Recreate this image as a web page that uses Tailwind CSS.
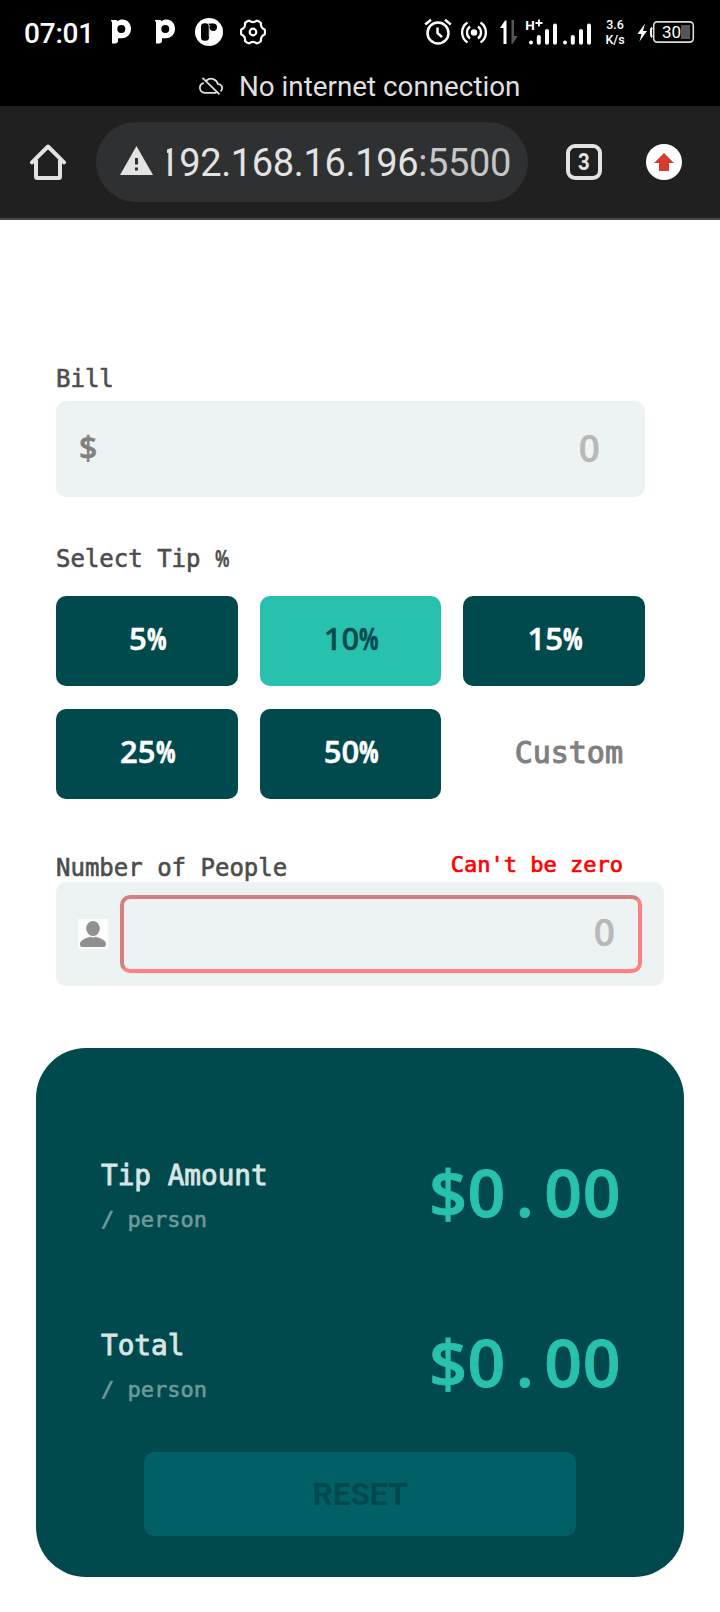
<!DOCTYPE html>
<html lang="en">
<head>
<meta charset="utf-8">
<meta name="viewport" content="width=device-width, initial-scale=1">
<title>Tip Calculator</title>
<script src="https://cdn.jsdelivr.net/npm/@tailwindcss/browser@4"></script>
</head>
<body class="bg-white font-['DejaVu_Sans_Mono',monospace]">
<div class="w-[720px] h-[1612px] overflow-hidden bg-white">

  <!-- System status bar -->
  <header class="h-[106px] bg-black text-white font-[Roboto,sans-serif]">
    <div class="h-16 flex items-center pl-6 pr-[25px]">
      <span class="w-[86px] text-[28px] leading-8 font-medium tracking-[-0.2px] pt-[3px]">07:01</span>
      <svg class="w-[22px] h-7" viewBox="110 18 22 28" fill="#fff"><path fill-rule="evenodd" d="M111 20h5.500l1 1.200c1.300-1 3-1.700 5-1.700 5 0 8.500 4 8.500 9.300 0 5.400-3.700 9.400-9 9.400h-4v2.500c0 1.800-1.200 2.800-3 2.800h-3V22c-.6-.2-1-.8-1-2zM121.300 25a4 4 0 1 0 0 8 4 4 0 0 0 0-8z"/></svg>
      <svg class="w-[22px] h-7 ml-[22px]" viewBox="110 18 22 28" fill="#fff"><path fill-rule="evenodd" d="M111 20h5.500l1 1.200c1.300-1 3-1.700 5-1.700 5 0 8.500 4 8.500 9.300 0 5.400-3.700 9.400-9 9.400h-4v2.500c0 1.800-1.200 2.800-3 2.800h-3V22c-.6-.2-1-.8-1-2zM121.300 25a4 4 0 1 0 0 8 4 4 0 0 0 0-8z"/></svg>
      <svg class="w-7 h-7 ml-[19px]" viewBox="0 0 28 28"><circle cx="14" cy="14" r="14" fill="#fff"/><rect x="6" y="5.300" width="8" height="17.500" rx="3.500"/><path d="M14 5.500v13" stroke="#999" stroke-width=".8"/><circle cx="18.300" cy="9.200" r="3.700"/><path d="M14 5.600h4v1.500h-4z"/></svg>
      <svg class="w-[26px] h-[26px] ml-[17px]" viewBox="0 0 26 26" fill="none" stroke="#fff" stroke-width="2.200"><path stroke-linejoin="round" d="M24.700 10.500Q25.300 13 24.700 15.500C21.800 16.700 20.600 18.800 21 21.900Q19.200 23.800 16.700 24.400C14.200 22.400 11.800 22.400 9.300 24.400Q6.800 23.800 5 21.900C5.400 18.800 4.200 16.700 1.300 15.500Q.7 13 1.300 10.500C4.200 9.300 5.400 7.200 5 4.100Q6.800 2.200 9.300 1.600C11.800 3.600 14.200 3.600 16.700 1.600Q19.200 2.200 21 4.100C20.600 7.200 21.800 9.300 24.700 10.500z"/><circle cx="13" cy="13" r="3.300"/></svg>
      <svg class="w-7 h-7 ml-auto" viewBox="0 0 28 28" fill="none" stroke="#fff" stroke-width="2.500"><circle cx="14" cy="15" r="10.500"/><path d="M1.200 6.500 7 1.800M26.800 6.500 21 1.800M13.500 9.500V15l4.500 4.200"/></svg>
      <svg class="w-[26px] h-[26px] ml-[9px]" viewBox="0 0 26 26" fill="none" stroke="#fff" stroke-width="2.300"><circle cx="13" cy="13.500" r="3.200" fill="#fff" stroke="none"/><path d="M9 19.500a7.500 7.500 0 0 1 0-12M17 7.500a7.500 7.500 0 0 1 0 12M6.500 23.500a12 12 0 0 1 0-20M19.500 3.500a12 12 0 0 1 0 20"/></svg>
      <svg class="w-[18px] h-6 ml-[13px]" viewBox="0 0 18 24"><path d="M6.500 24h-3V8H0L5 .5h1.500z" fill="#fff"/><path d="M11.500 0h2.500v16h3.800L12.500 24h-1z" fill="#555"/></svg>
      <svg class="w-[34px] h-[30px] ml-1.5 mb-1 overflow-visible" viewBox="524 14 34 30" fill="#fff"><text x="525.300" y="29" font-family="Roboto" font-size="13.500" font-weight="700">H</text><path d="M539 18.500v7M535.500 22h7" stroke="#fff" stroke-width="1.800"/><g stroke="#fff" stroke-width="4" stroke-linecap="round"><path d="M531 41.500v.1M538.800 36v5.700M547 30v11.700M555 24.500v17.200"/></g></svg>
      <svg class="w-[29px] h-[26px] ml-1" viewBox="562 18 29 26" stroke="#fff" stroke-width="4" stroke-linecap="round"><path d="M565 41.500v.1M572.800 36v5.700M581 30v11.700M589 24.500v17.200"/></svg>
      <span class="w-[22px] ml-[13px] text-center text-[12.5px] leading-[15px] font-medium whitespace-nowrap">3.6<br>K/s</span>
      <svg class="w-[58px] h-[24px] ml-[11px]" viewBox="638 20 58 24"><path d="M646 23.500 638.500 34h4l-2 7.500 7.500-10.500h-4z" fill="#fff"/><path d="M653 27.500c-1.500 1.500-1.500 8.300 0 9.800" fill="none" stroke="#fff" stroke-width="2"/><rect x="654.700" y="21.900" width="39.600" height="20.200" rx="3.500" fill="none" stroke="#ddd" stroke-width="1.600"/><path d="M682 25h9v14h-9z" fill="#555"/><text x="663" y="38" fill="#fff" font-family="Roboto" font-size="17" textLength="19">30</text></svg>
    </div>
    <div class="h-[42px] flex items-center pl-[199px] text-[#dfdfdf]">
      <svg class="w-6 h-[18px] mt-0.5" viewBox="0 0 24 18" fill="none" stroke="#dfdfdf" stroke-width="1.800"><path d="M7.500 3.500A7 7 0 0 1 19 7.200c3.200.2 4.300 2.600 4.100 4.300-.1 1.300-.8 2.200-1.500 2.900M4.800 5.800C2 6.700.9 8.700.9 10.800c0 2.800 2.100 5 5 5h11.500M3.500.8 20.500 17.300"/></svg>
      <span class="ml-[16px] text-[27.8px] leading-8 pt-[3px] whitespace-nowrap">No internet connection</span>
    </div>
  </header>

  <!-- Browser toolbar -->
  <nav class="h-[114px] bg-[#202020] border-b-2 border-[#48484a] flex items-center pl-[30px] pr-[38px] font-[Roboto,sans-serif]">
    <svg class="w-9 h-9" viewBox="0 0 36 36" fill="none" stroke="#e3e3e3" stroke-width="4" stroke-linejoin="round"><path stroke-linecap="round" d="M2 18.300 18 2.500 34 18.300"/><path d="M6 15.500V32.500a1.500 1.500 0 0 0 1.500 1.500h21a1.500 1.500 0 0 0 1.500-1.500V15.500"/></svg>
    <div class="ml-[30px] w-[432px] h-20 rounded-full bg-[#2f3032] flex items-center pl-6">
      <svg class="w-[33px] h-[29px] mb-[3px]" viewBox="0 0 33 29"><path d="M16.500 0 33 29H0z" fill="#e3e3e3"/><path d="M15 12h3v6.500h-3zM15 21.500h3v3h-3z" fill="#2f3032"/></svg>
      <div class="ml-[14px] mt-px w-[344px] flex justify-end overflow-hidden text-[38px] tracking-[-0.36px] leading-[46px] text-[#e3e3e3] whitespace-nowrap"><span>192.168.16.196<span class="text-[#c4c7c5]">:5500</span></span></div>
    </div>
    <div class="ml-[38px] w-9 h-9 rounded-[9px] border-4 border-[#e3e3e3] text-[#e3e3e3] text-[24px] leading-[29px] font-bold text-center"><span class="inline-block scale-x-[.85]">3</span></div>
    <svg class="w-9 h-9 ml-auto" viewBox="0 0 36 36"><circle cx="18" cy="18" r="18" fill="#fff"/><path d="M18 9 28 19h-5v8H13v-8H8z" fill="#d63c2e"/></svg>
  </nav>

  <main class="pt-[141px]">
    <form class="pl-14">
      <label class="block h-9 text-[24px] leading-9 text-[#4d4d4d] [-webkit-text-stroke:0.6px_#4d4d4d]">Bill</label>
      <div class="mt-1 w-[589px] h-24 rounded-[10px] bg-[#edf3f3] flex items-center justify-between pl-[23px] pr-[45px] pb-[2px] font-['Open_Sans',sans-serif] font-semibold">
        <span class="text-[32px] leading-10 text-[#808080] [-webkit-text-stroke:0.5px_#808080]">$</span>
        <span class="text-[37px] leading-10 text-[#b8b8b8] [-webkit-text-stroke:0.4px_#b8b8b8]">0</span>
      </div>

      <label class="mt-[43px] block h-9 text-[24px] leading-9 text-[#4d4d4d] [-webkit-text-stroke:0.6px_#4d4d4d]">Select Tip <span class="inline-block w-[14.4px] font-['Open_Sans',sans-serif] font-semibold"><span class="inline-block origin-left scale-x-[.70]">%</span></span></label>
      <div class="mt-5 w-[589px] h-[203px] grid grid-cols-3 grid-rows-2 gap-x-[22px] gap-y-[23px] font-['Open_Sans',sans-serif] font-semibold text-[31px] text-white">
        <button type="button" class="rounded-[10px] bg-[#00494d] pb-[6px] [-webkit-text-stroke:0.5px_#fff]">5<span class="inline-block w-[18px]"><span class="inline-block origin-left scale-x-[.70] font-bold [-webkit-text-stroke:0.6px_#fff]">%</span></span></button>
        <button type="button" class="rounded-[10px] bg-[#28c1ad] text-[#00494d] pb-[6px] [-webkit-text-stroke:0.3px_#00494d]">10<span class="inline-block w-[18px]"><span class="inline-block origin-left scale-x-[.70] font-bold [-webkit-text-stroke:0.4px_#00494d]">%</span></span></button>
        <button type="button" class="rounded-[10px] bg-[#00494d] pb-[6px] [-webkit-text-stroke:0.5px_#fff]">15<span class="inline-block w-[18px]"><span class="inline-block origin-left scale-x-[.70] font-bold [-webkit-text-stroke:0.6px_#fff]">%</span></span></button>
        <button type="button" class="rounded-[10px] bg-[#00494d] pb-[5px] [-webkit-text-stroke:0.5px_#fff]">25<span class="inline-block w-[18px]"><span class="inline-block origin-left scale-x-[.70] font-bold [-webkit-text-stroke:0.6px_#fff]">%</span></span></button>
        <button type="button" class="rounded-[10px] bg-[#00494d] pb-[5px] [-webkit-text-stroke:0.5px_#fff]">50<span class="inline-block w-[18px]"><span class="inline-block origin-left scale-x-[.70] font-bold [-webkit-text-stroke:0.6px_#fff]">%</span></span></button>
        <div class="flex items-center justify-end pr-[22px] pb-1 font-['DejaVu_Sans_Mono',monospace] font-normal text-[30px] text-[#808080] [-webkit-text-stroke:1.1px_#808080]">Custom</div>
      </div>

      <div class="mt-[53px] w-[589px] h-[30px] flex justify-between pr-[22px]">
        <label class="text-[24px] leading-[32px] text-[#4d4d4d] [-webkit-text-stroke:0.6px_#4d4d4d]">Number of People</label>
        <span class="text-[22px] leading-[26px] text-[#ff0000] [-webkit-text-stroke:0.7px_#ff0000]">Can't be zero</span>
      </div>
      <div class="w-[608px] h-[104px] rounded-[10px] bg-[#edf3f3] flex items-center pl-[22px]">
        <svg class="w-[30px] h-[30px]" viewBox="0 0 30 30"><path d="M0 0h30v30H0z" fill="#fdfdfd"/><path d="M2 25c0-3.500 5-5.500 10-7.200 2 .9 4 .9 6 0C23 19.500 28 21.500 28 25c0 2-.7 3-2 3H4c-1.300 0-2-1-2-3z" fill="#918f90"/><ellipse cx="15" cy="9.500" rx="6.800" ry="7.500" fill="#918f90"/></svg>
        <div class="ml-3 w-[522px] h-[78px] rounded-[10px] border-4 border-t-[#d48080] border-l-[#d48080] border-r-[#ff8080] border-b-[#ff8080] flex items-center justify-end pr-[23px] pb-[5px] font-['Open_Sans',sans-serif] font-semibold text-[37px] leading-10 text-[#b8b8b8] [-webkit-text-stroke:0.4px_#b8b8b8]">0</div>
      </div>
    </form>

    <section class="ml-9 mt-[62px] w-[648px] h-[529px] rounded-[50px] bg-[#00494d] pt-[110px]">
      <div class="h-[78px] pl-[65px] pr-[63px] flex justify-between">
        <div>
          <p class="h-9 text-[27.700px] leading-9 text-[#d9e4e5] [-webkit-text-stroke:0.9px_#d9e4e5]">Tip Amount</p>
          <p class="mt-[11px] h-[30px] text-[22px] leading-[30px] text-[#6f999b] [-webkit-text-stroke:0.6px_#6f999b]">/ person</p>
        </div>
        <p class="-mt-0.5 text-[66px] leading-[70px] tracking-[0.6px] font-['Open_Sans',sans-serif] font-semibold text-[#28c1ad] [-webkit-text-stroke:0.9px_#28c1ad]">$0<span class="inline-block w-[38.400px] text-center">.</span>00</p>
      </div>
      <div class="mt-[92px] h-[78px] pl-[65px] pr-[63px] flex justify-between">
        <div>
          <p class="h-9 text-[27.700px] leading-9 text-[#d9e4e5] [-webkit-text-stroke:0.9px_#d9e4e5]">Total</p>
          <p class="mt-[11px] h-[30px] text-[22px] leading-[30px] text-[#6f999b] [-webkit-text-stroke:0.6px_#6f999b]">/ person</p>
        </div>
        <p class="-mt-0.5 text-[66px] leading-[70px] tracking-[0.6px] font-['Open_Sans',sans-serif] font-semibold text-[#28c1ad] [-webkit-text-stroke:0.9px_#28c1ad]">$0<span class="inline-block w-[38.400px] text-center">.</span>00</p>
      </div>
      <button type="button" class="mt-[46px] mx-auto block w-[432px] h-[84px] rounded-[10px] bg-[#006066] pt-0.5 font-[Roboto,sans-serif] font-bold text-[31.500px] text-[#00494d]">RESET</button>
    </section>
  </main>
</div>
</body>
</html>
